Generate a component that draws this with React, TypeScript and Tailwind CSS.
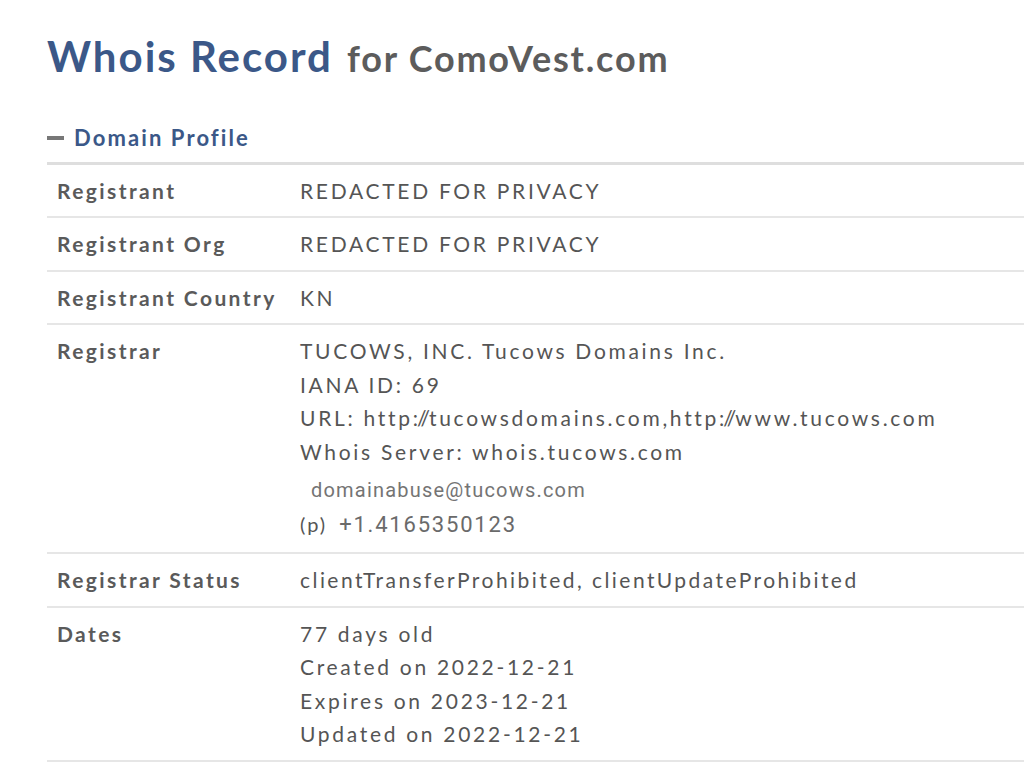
import React from 'react';

const rows: { label: string; lines: React.ReactNode[] }[] = [
  { label: 'Registrant', lines: ['REDACTED FOR PRIVACY'] },
  { label: 'Registrant Org', lines: ['REDACTED FOR PRIVACY'] },
  { label: 'Registrant Country', lines: ['KN'] },
];

// the slashes in "http://" sit almost on top of each other in the source
const Slashes = () => (
  <>
    <span className="tracking-[-1px]">:</span>
    <span className="tracking-[-6px]">/</span>
    <span className="tracking-[-1px]">/</span>
  </>
);

const Row = ({ label, children }: { label: string; children: React.ReactNode }) => (
  <div className="flex border-b-2 border-[#e6e6e6] py-[9px]">
    <div className="w-[253px] shrink-0 whitespace-nowrap pl-[10px] font-bold tracking-[2.4px] text-[#5a5a5a]">
      {label}
    </div>
    <div className="whitespace-nowrap text-[#555]">{children}</div>
  </div>
);

const App = () => {
  return (
    <div className="min-h-[764px] overflow-hidden bg-white pl-[47px] pt-[30px] font-['Lato',sans-serif] text-[21px] leading-[33.5px] tracking-[2.7px]">
      <h1 className="whitespace-nowrap font-bold leading-[52px]">
        <span className="text-[42px] tracking-[2px] text-[#3b5888]">Whois Record</span>
        <span className="ml-[14px] text-[36px] tracking-[1.8px] text-[#5c5c5c]">for ComoVest.com</span>
      </h1>

      <div className="mt-[31px] flex items-center gap-[10px] text-[22px] font-bold tracking-[2.1px] text-[#3b5888]">
        <span className="h-[4px] w-[17px] bg-[#777]" />
        <span>Domain Profile</span>
      </div>

      <div className="mt-[7px] w-[1100px] border-t-[3px] border-[#dedede]">
        {rows.map((r) => (
          <Row key={r.label} label={r.label}>
            {r.lines}
          </Row>
        ))}
        <Row label="Registrar">
          <div>TUCOWS, INC. Tucows Domains Inc.</div>
          <div>IANA ID: 69</div>
          <div>
            URL: http<Slashes />tucowsdomains.com,http<Slashes />www.tucows.com
          </div>
          <div>Whois Server: whois.tucows.com</div>
          <div className="mt-[6px] pl-[11px] font-['Roboto',sans-serif] text-[20px] tracking-[1.2px] text-[#747474]">
            domainabuse@tucows.com
          </div>
          <div className="flex items-center">
            <span className="text-[20px] tracking-[2px]">(p)</span>
            <span className="ml-[12px] font-['Roboto',sans-serif] text-[22px] tracking-[1.8px] text-[#6a6a6a]">
              +1.4165350123
            </span>
          </div>
          <div className="h-[2px]" />
        </Row>
        <Row label="Registrar Status">
          <span className="tracking-[2.45px]">clientTransferProhibited, clientUpdateProhibited</span>
        </Row>
        <Row label="Dates">
          <div>77 days old</div>
          <div>Created on 2022-12-21</div>
          <div>Expires on 2023-12-21</div>
          <div>Updated on 2022-12-21</div>
        </Row>
      </div>
    </div>
  );
};

export default App;
